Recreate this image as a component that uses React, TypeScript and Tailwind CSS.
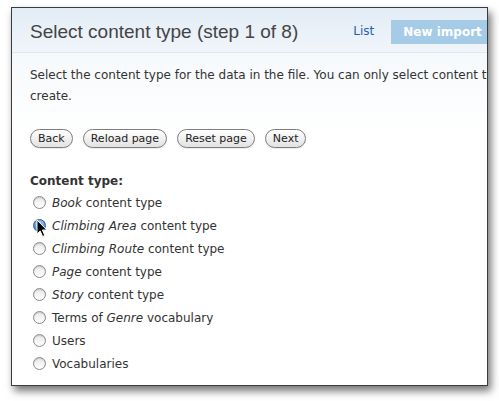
import React from 'react'

const options: { em?: string; pre?: string; post: string; checked?: boolean }[] = [
  { em: 'Book', post: ' content type' },
  { em: 'Climbing Area', post: ' content type', checked: true },
  { em: 'Climbing Route', post: ' content type' },
  { em: 'Page', post: ' content type' },
  { em: 'Story', post: ' content type' },
  { pre: 'Terms of ', em: 'Genre', post: ' vocabulary' },
  { post: 'Users' },
  { post: 'Vocabularies' },
]

function Radio({ checked }: { checked?: boolean }) {
  if (checked) {
    return (
      <span className="relative inline-flex w-[13px] h-[13px] rounded-full border border-[#2a5d9c] bg-[radial-gradient(circle_at_50%_35%,#cfe4fb_0%,#5d9be0_55%,#2563b8_100%)] items-center justify-center">
        <span className="w-[5px] h-[5px] rounded-full bg-[#1c2c44]" />
      </span>
    )
  }
  return (
    <span className="inline-block w-[13px] h-[13px] rounded-full border border-[#8a8a8a] bg-gradient-to-b from-[#e8e8e8] to-white shadow-[inset_0_1px_1px_rgba(0,0,0,0.15)]" />
  )
}

function Cursor() {
  return (
    <svg className="absolute left-[6px] top-[5px]" width="12" height="19" viewBox="0 0 12 19">
      <path d="M1 1 L1 15 L4.2 12 L6.6 17.5 L8.8 16.5 L6.4 11 L10.8 11 Z" fill="#000" stroke="#fff" strokeWidth="1" strokeLinejoin="round" />
    </svg>
  )
}

function PillButton({ label }: { label: string }) {
  return (
    <button className="h-[19px] px-[7px] rounded-full border border-[#7d7d7d] bg-gradient-to-b from-white to-[#e2e2e2] text-[11px] text-[#222] leading-none shadow-[0_1px_0_rgba(0,0,0,0.08)]">
      {label}
    </button>
  )
}

export default function App() {
  return (
    <div className="w-[499px] h-[401px] bg-white pt-[7px] pl-[11px]" style={{ fontFamily: '"DejaVu Sans", Verdana, sans-serif' }}>
      <div className="w-[477px] h-[379px] border border-[#3a3a3a] overflow-hidden bg-white shadow-[3px_5px_8px_rgba(0,0,0,0.55)]">
        <div className="h-[45px] flex items-center pl-[18px] bg-gradient-to-b from-[#e2ecf6] to-[#f1f5fa] border-b border-[#dfe7ef] whitespace-nowrap">
          <h1 className="text-[19px] text-[#444] pt-[5px]" style={{ fontFamily: '"Liberation Sans", Arial, sans-serif' }}>
            Select content type (step 1 of 8)
          </h1>
          <a className="ml-[55px] text-[12px] text-[#1f62b4] pt-[2px]">List</a>
          <span className="ml-[17px] h-[24px] mt-[3px] pl-[12px] pr-[14px] flex items-center bg-[#a5cbe6] text-white font-bold text-[12px]">
            New import
          </span>
        </div>
        <div className="bg-gradient-to-b from-[#f6f9fc] to-white to-[80px] pl-[18px] pt-[12px] text-[12px] text-[#333] whitespace-nowrap">
          <p className="leading-[21px]">
            Select the content type for the data in the file. You can only select content types you have permission to
            <br />
            create.
          </p>
          <div className="flex gap-[10px] mt-[22px]">
            <PillButton label="Back" />
            <PillButton label="Reload page" />
            <PillButton label="Reset page" />
            <PillButton label="Next" />
          </div>
          <div className="mt-[24px] font-bold text-[#333]">Content type:</div>
          <div className="mt-[1px] flex flex-col">
            {options.map((o, i) => (
              <label key={i} className="relative h-[23px] flex items-center gap-[6px] pl-[3px]">
                <Radio checked={o.checked} />
                <span>
                  {o.pre}
                  {o.em && <em>{o.em}</em>}
                  {o.post}
                </span>
                {o.checked && <Cursor />}
              </label>
            ))}
          </div>
        </div>
      </div>
    </div>
  )
}
